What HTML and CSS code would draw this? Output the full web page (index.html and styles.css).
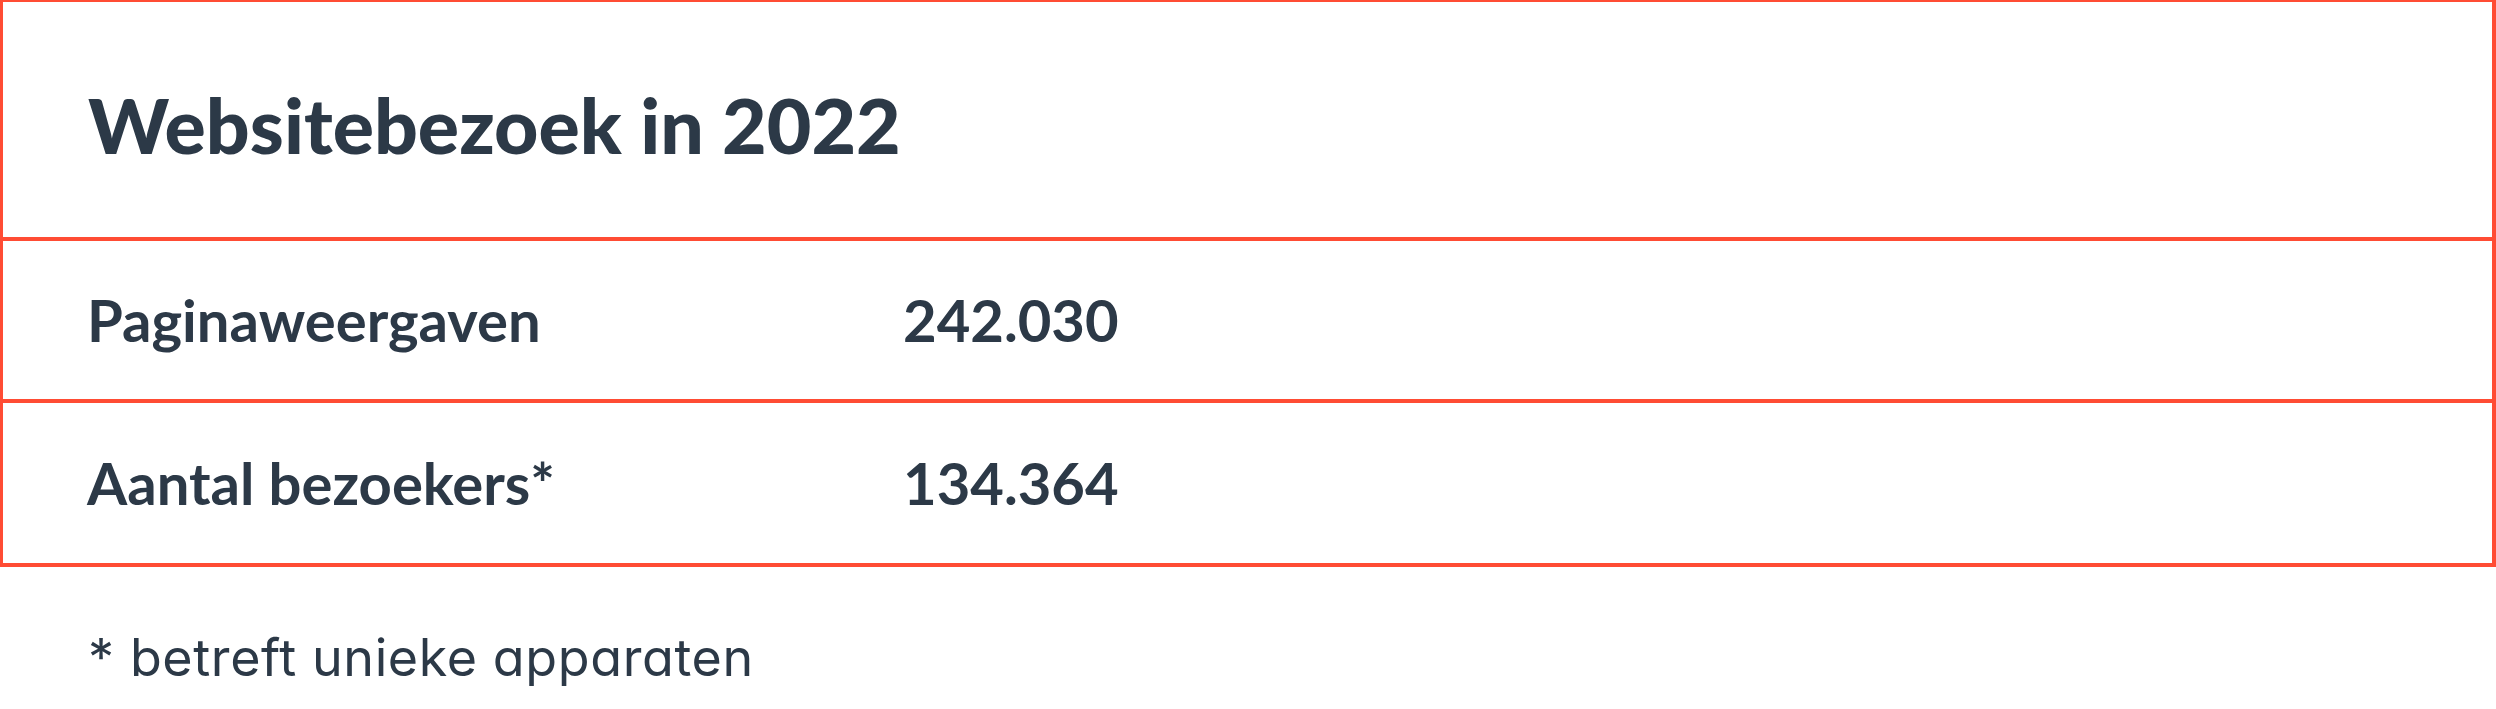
FILE: index.html
```html
<!DOCTYPE html>
<html lang="nl">
<head>
<meta charset="utf-8">
<title>Websitebezoek in 2022</title>
<link rel="stylesheet" href="styles.css">
</head>
<body>
<div class="page">
  <div class="stats">
    <div class="stats-head">
      <h2 class="stats-title">Websitebezoek in 2022</h2>
    </div>
    <div class="stats-row">
      <div class="stats-label">Paginaweergaven</div>
      <div class="stats-value">242.030</div>
    </div>
    <div class="stats-row stats-row--last">
      <div class="stats-label">Aantal bezoekers*</div>
      <div class="stats-value">134.364</div>
    </div>
  </div>
  <p class="footnote">* betreft unieke apparaten</p>
</div>
</body>
</html>
```

FILE: styles.css
```css
html, body {
  margin: 0;
  padding: 0;
  background: #ffffff;
}

.page {
  width: 2496px;
  color: #2c3947;
}

.stats {
  border-style: solid;
  border-color: #ff4c34;
  border-width: 2px 4px 4px 3px;
  font-family: "Lato", "Liberation Sans", sans-serif;
  font-weight: 700;
}

.stats-head {
  height: 239px;
  display: flex;
  align-items: center;
  padding-left: 85px;
  padding-top: 10px;
  border-bottom: 4px solid #ff4c34;
  box-sizing: border-box;
}

.stats-title {
  margin: 0;
  font-size: 77px;
  line-height: 1.2;
  font-weight: 900;
}

.stats-row {
  display: grid;
  grid-template-columns: 900px 1fr;
  align-items: center;
  height: 158px;
  border-bottom: 4px solid #ff4c34;
  font-size: 58px;
  line-height: 1.2;
}

.stats-row--last {
  border-bottom: none;
  height: 160px;
}

.stats-label {
  padding-left: 84px;
}

.footnote {
  margin: 0;
  padding: 60px 0 0 88px;
  font-family: "Inter", "Noto Sans", sans-serif;
  font-feature-settings: "cv11" 1;
  font-size: 52px;
  letter-spacing: 0.6px;
  font-weight: 400;
  line-height: 1.2;
}
```
